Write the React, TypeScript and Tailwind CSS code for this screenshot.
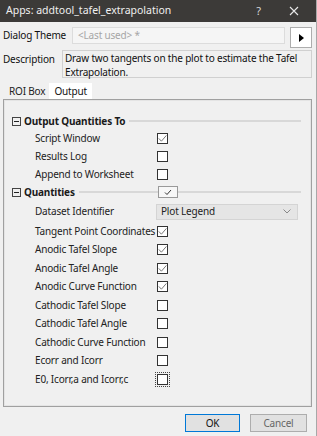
type Row = { label: string; checked?: boolean; focus?: boolean }

const outputRows: Row[] = [
  { label: 'Script Window', checked: true },
  { label: 'Results Log' },
  { label: 'Append to Worksheet' },
]

const quantityRows: Row[] = [
  { label: 'Tangent Point Coordinates', checked: true },
  { label: 'Anodic Tafel Slope', checked: true },
  { label: 'Anodic Tafel Angle', checked: true },
  { label: 'Anodic Curve Function', checked: true },
  { label: 'Cathodic Tafel Slope' },
  { label: 'Cathodic Tafel Angle' },
  { label: 'Cathodic Curve Function' },
  { label: 'Ecorr and Icorr' },
  { label: 'E0, Icorr,a and Icorr,c', focus: true },
]

const Check = ({ checked, focus }: { checked?: boolean; focus?: boolean }) => (
  <div className={focus ? 'outline outline-1 outline-dotted outline-[#444] outline-offset-[1px]' : ''}>
    <div className="w-[11px] h-[11px] border border-[#333] bg-white flex items-center justify-center">
      {checked && (
        <svg width="9" height="9" viewBox="0 0 9 9">
          <path d="M0.8 4.4 L3.4 7.2 L8.4 1.4" fill="none" stroke="#7a7a7a" strokeWidth="1" />
        </svg>
      )}
    </div>
  </div>
)

const Minus = () => (
  <div className="w-[9px] h-[9px] border border-[#444] flex items-center justify-center">
    <div className="w-[5px] h-px bg-[#222]" />
  </div>
)

const Header = ({ title, h, children }: { title: string; h: string; children?: React.ReactNode }) => (
  <div className={`relative flex items-center pl-[7px] pr-[9px] ${h}`}>
    <Minus />
    <span className="ml-[3px] font-bold text-[#1a1a1a]">{title}</span>
    <div className="flex-1 ml-[4px] h-[2px] bg-[#d8d8d8]" />
    {children}
  </div>
)

const OptionRow = ({ row, h }: { row: Row; h: string }) => (
  <div className={`flex items-center pl-[30px] ${h}`}>
    <span className="w-[122px] whitespace-nowrap text-[#222]">{row.label}</span>
    <Check checked={row.checked} focus={row.focus} />
  </div>
)

export default function App() {
  return (
    <div
      className="w-[317px] h-[436px] bg-[#f0f0f0] flex flex-col text-[10px] tracking-[-0.18px] border-r border-[#a8a8a8]"
      style={{ fontFamily: '"Noto Sans", "Open Sans", sans-serif' }}
    >
      <div className="h-[22px] bg-[#3c3a38] flex items-center shrink-0 tracking-normal">
        <span className="pl-[6px] text-[10.5px] text-[#f0f0f0]">Apps: addtool_tafel_extrapolation</span>
        <span className="ml-auto mr-[28px] text-[11px] text-[#d8d8d8]">?</span>
        <svg width="10" height="10" viewBox="0 0 10 10" className="mr-[17px]">
          <path d="M1 1 L9 9 M9 1 L1 9" stroke="#e8e8e8" strokeWidth="1.1" />
        </svg>
      </div>

      <div className="flex items-start mt-[5px] pl-[3px] h-[21px]">
        <span className="w-[69px] whitespace-nowrap text-[#111] leading-[17px]">Dialog Theme</span>
        <div className="w-[213px] h-[17px] border border-[#dcdcdc] bg-[#f5f5f5] flex items-center pl-[5px] text-[#a6a6a6]">
          &lt;Last used&gt; *
        </div>
        <div className="ml-[5px] w-[22px] h-[21px] border border-[#adadad] bg-white flex items-center justify-center">
          <svg width="5" height="8" viewBox="0 0 5 8">
            <path d="M0 0 L5 4 L0 8 Z" fill="#000" />
          </svg>
        </div>
      </div>

      <div className="flex mt-[2px] pl-[3px]">
        <span className="w-[59px] pt-[2px] whitespace-nowrap text-[#111]">Description</span>
        <div className="w-[250px] h-[28px] border border-[#d0d0d0] pl-[2px] leading-[14px] text-[#111]">
          Draw two tangents on the plot to estimate the Tafel Extrapolation.
        </div>
      </div>

      <div className="flex mt-[5px] pl-[6px] h-[16px] items-end">
        <div className="px-[3px] h-[15px] flex items-center text-[#222]">ROI Box</div>
        <div className="ml-[1px] px-[5px] h-[16px] bg-white flex items-center text-[#111]">Output</div>
      </div>

      <div className="ml-[3px] w-[309px] h-[308px] border border-[#a0a0a0]">
        <div className="h-full border border-[#e4e4e4] pt-[12px]">
          <Header title="Output Quantities To" h="h-[16px]" />
          {outputRows.map((r) => (
            <OptionRow key={r.label} row={r} h="h-[18px]" />
          ))}
          <Header title="Quantities" h="h-[18px]">
            <div className="absolute left-[153px] top-[3px] w-[20px] h-[12px] border border-[#999] bg-[#f7f7f7] flex items-center justify-center">
              <svg width="8" height="7" viewBox="0 0 8 7">
                <path d="M1 3.5 L3 5.5 L7 1" fill="none" stroke="#333" strokeWidth="1" />
              </svg>
            </div>
          </Header>
          <div className="flex items-center h-[21px] pl-[30px]">
            <span className="w-[121px] text-[#222]">Dataset Identifier</span>
            <div className="w-[142px] h-[16px] border border-[#d4d4d4] bg-[#e5e5e5] flex items-center pl-[4px] text-[#222]">
              Plot Legend
              <svg width="8" height="5" viewBox="0 0 8 5" className="ml-auto mr-[6px]">
                <path d="M0.5 0.5 L4 4 L7.5 0.5" fill="none" stroke="#888" strokeWidth="1" />
              </svg>
            </div>
          </div>
          {quantityRows.map((r) => (
            <OptionRow key={r.label} row={r} h="h-[18.5px]" />
          ))}
        </div>
      </div>

      <div className="flex justify-end mt-[7px] pr-[9px] gap-[10px]">
        <div className="w-[55px] h-[18px] border border-[#0078d7] bg-[#e1e1e1] flex items-center justify-center text-[#111]">
          OK
        </div>
        <div className="w-[57px] h-[18px] border border-[#adadad] bg-[#e1e1e1] flex items-center justify-center text-[#666]">
          Cancel
        </div>
      </div>
    </div>
  )
}
